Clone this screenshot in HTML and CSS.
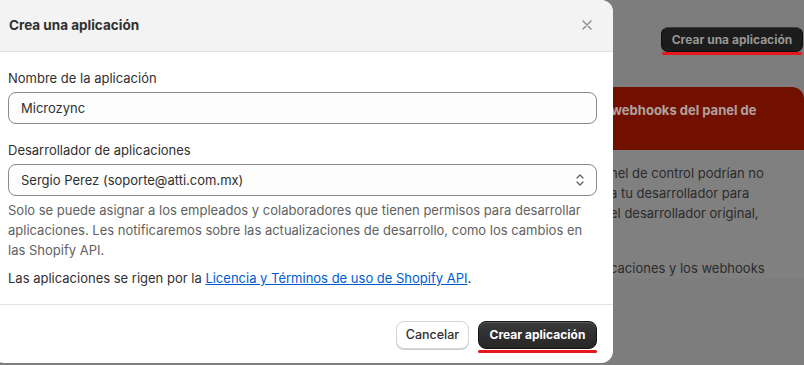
FILE: index.html
```html
<!DOCTYPE html>
<html lang="es">
<head>
<meta charset="utf-8">
<title>Crea una aplicación</title>
<link rel="stylesheet" href="styles.css">
</head>
<body>
<div class="page">
  <div class="page-head">
    <button class="bg-btn">Crear una aplicación</button>
  </div>
  <section class="card">
    <div class="card-banner">
      <p class="banner-title">webhooks del panel de</p>
    </div>
    <div class="card-body">
      <p class="clip">nel de control podrían no</p>
      <p class="clip">a tu desarrollador para</p>
      <p class="clip">el desarrollador original,</p>
      <p class="clip blank">&nbsp;</p>
      <p class="clip gap">caciones y los webhooks</p>
    </div>
  </section>
</div>

<div class="modal" role="dialog" aria-labelledby="modal-title">
  <header class="modal-header">
    <h2 id="modal-title" class="modal-title">Crea una aplicación</h2>
    <button class="close" aria-label="Cerrar">
      <svg width="10" height="10" viewBox="0 0 10 10"><path d="M1 1 L9 9 M9 1 L1 9" stroke="#8a8a8a" stroke-width="1.4" stroke-linecap="round"/></svg>
    </button>
  </header>
  <div class="modal-body">
    <div class="field">
      <label class="label">Nombre de la aplicación</label>
      <div class="input">Microzync</div>
    </div>
    <div class="field">
      <label class="label">Desarrollador de aplicaciones</label>
      <div class="input select">
        <span>Sergio Perez (soporte@atti.com.mx)</span>
        <svg width="12" height="16" viewBox="0 0 12 16"><path d="M3 6 L6 3 L9 6 M3 10 L6 13 L9 10" fill="none" stroke="#616161" stroke-width="1.3" stroke-linecap="round" stroke-linejoin="round"/></svg>
      </div>
      <p class="help">Solo se puede asignar a los empleados y colaboradores que tienen permisos para desarrollar aplicaciones. Les notificaremos sobre las actualizaciones de desarrollo, como los cambios en las Shopify API.</p>
    </div>
    <p class="policy">Las aplicaciones se rigen por la <a href="#">Licencia y Términos de uso de Shopify API</a>.</p>
  </div>
  <footer class="modal-footer">
    <button class="btn">Cancelar</button>
    <button class="btn primary">Crear aplicación</button>
  </footer>
</div>
</body>
</html>
```

FILE: styles.css
```css
* { box-sizing: border-box; }
html, body { margin: 0; padding: 0; }
body {
  width: 804px;
  height: 365px;
  overflow: hidden;
  background: #7d7d7d;
  font-family: Inter, "Liberation Sans", sans-serif;
  font-size: 13px;
  line-height: 20px;
  color: #303030;
  position: relative;
}
p { margin: 0; }

/* dimmed page behind */
.page {
  display: flex;
  flex-direction: column;
  padding: 27px 0 0 600px;
}
.page-head {
  display: flex;
  justify-content: flex-end;
  height: 60px;
}
.bg-btn {
  position: relative;
  height: 25px;
  width: 142px;
  margin-right: 1px;
  background: #1c1c1c;
  border: 1px solid #0e0e0e;
  border-top-color: #3a3a3a;
  border-radius: 7px;
  color: #979797;
  font: 700 12px/20px Inter, "Liberation Sans", sans-serif;
  padding: 0;
  white-space: nowrap;
}
.bg-btn::after {
  content: "";
  position: absolute;
  left: 0;
  right: 0;
  bottom: -4px;
  height: 3px;
  border-radius: 2px;
  background: #e5191c;
}
.card {
  background: #808080;
  border-radius: 0 12px 0 0;
  overflow: hidden;
}
.card-banner {
  background: #721000;
  height: 63px;
  padding: 13px 0 0 11px;
}
.banner-title {
  font-weight: 700;
  color: #b1a19f;
  white-space: nowrap;
}
.card-body {
  padding: 13px 0 0 10px;
  color: #2b2b2b;
}
.clip { white-space: nowrap; }
.gap { margin-top: 15px; }

/* modal */
.modal {
  position: absolute;
  left: -8px;
  top: 0;
  width: 621px;
  height: 363px;
  background: #fff;
  border-radius: 0 12px 12px 12px;
  overflow: hidden;
  display: flex;
  flex-direction: column;
}
.modal-header {
  height: 52px;
  background: #f3f3f3;
  border-bottom: 1px solid #e3e3e3;
  display: flex;
  align-items: center;
  justify-content: space-between;
  padding: 0 16px 2px 17px;
}
.modal-title {
  margin: 0;
  font-size: 13.5px;
  font-weight: 650;
  color: #303030;
}
.close {
  background: none;
  border: 0;
  padding: 0;
  width: 14px;
  height: 14px;
  display: flex;
  align-items: center;
  justify-content: center;
  margin-right: 3px;
}
.modal-body {
  padding: 16px;
  border-bottom: 1px solid #e3e3e3;
  display: flex;
  flex-direction: column;
  gap: 16px;
}
.field {
  display: flex;
  flex-direction: column;
  gap: 4px;
}
.label { color: #303030; }
.input {
  height: 32px;
  border: 1px solid #8a8a8a;
  border-radius: 8px;
  background: #fdfdfd;
  padding: 0 12px;
  display: flex;
  align-items: center;
  color: #303030;
}
.select { justify-content: space-between; padding-right: 10px; }
.help { color: #616161; }
.policy { color: #303030; margin-top: -8px; }
.policy a { color: #005bd3; text-decoration: underline; }

.modal-footer {
  display: flex;
  justify-content: flex-end;
  gap: 9px;
  padding: 16px 16px 0;
}
.btn {
  position: relative;
  height: 28px;
  width: 73px;
  padding: 0;
  border-radius: 8px;
  border: 1px solid #d6d6d6;
  background: #fff;
  box-shadow: 0 1px 0 #cfcfcf;
  color: #303030;
  font: 450 12.5px/20px Inter, "Liberation Sans", sans-serif;
  white-space: nowrap;
}
.btn.primary {
  width: 119px;
  background: linear-gradient(#3a3a3a, #262626);
  border-color: #141414;
  color: #fff;
  font-size: 12px;
  font-weight: 700;
  box-shadow: inset 0 1px 0 #5a5a5a;
}
.btn.primary::after {
  content: "";
  position: absolute;
  left: -1px;
  right: -1px;
  bottom: -5px;
  height: 3px;
  border-radius: 2px;
  background: #e5191c;
}
```
